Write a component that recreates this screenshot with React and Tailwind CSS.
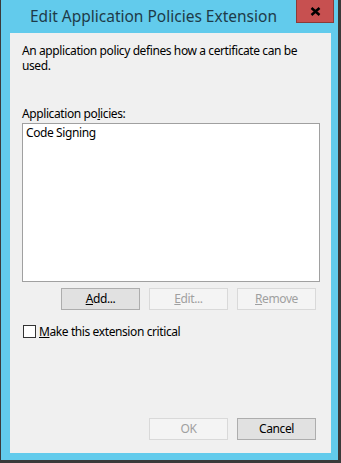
export default function App() {
  const font = { fontFamily: '"Noto Sans", "Open Sans", "Liberation Sans", sans-serif' };
  return (
    <div className="w-[341px] h-[463px] bg-white">
      <div
        className="w-[341px] h-[463px] bg-[#62cbec] border-l border-r-[3px] border-b-[3px] border-[#3a3a3a] flex flex-col"
        style={font}
      >
        <div className="h-[33px] flex items-start">
          <div className="ml-[29px] mt-[5px] text-[15.5px] leading-[22px] text-[#1e3b49]">
            Edit Application Policies Extension
          </div>
          <div className="ml-auto mr-[4px] w-[38px] h-[23px] bg-[#c75050] border-x border-b border-[#8a3b38] flex items-center justify-center">
            <svg width="11" height="9" viewBox="0 0 11 9">
              <path d="M1.5 1 L9.5 8 M9.5 1 L1.5 8" stroke="#000" strokeWidth="2.5" />
            </svg>
          </div>
        </div>
        <div className="ml-[9px] mr-[7px] h-[420px] bg-[#f0f0f0] flex flex-col text-[12px] text-[#000] tracking-[-0.4px]">
          <div className="pl-[12px] pt-[10px] leading-[15px] pr-[20px]">
            An application policy defines how a certificate can be used.
          </div>
          <div className="pl-[12px] mt-[33px] leading-[15px]">
            Application po<span className="underline">l</span>icies:
          </div>
          <div className="ml-[12px] mt-[2px] w-[298px] h-[159px] bg-white border border-[#a0a0a0] pl-[3px] pt-[1px] leading-[15px]">
            Code Signing
          </div>
          <div className="flex gap-[9px] ml-[51px] mt-[6px]">
            <div className="w-[79px] h-[22px] bg-[#e1e1e1] border border-[#adadad] flex items-center justify-center">
              <span><span className="underline">A</span>dd...</span>
            </div>
            <div className="w-[79px] h-[22px] bg-[#f4f4f4] border border-[#d9d9d9] text-[#a0a0a0] flex items-center justify-center">
              <span><span className="underline">E</span>dit...</span>
            </div>
            <div className="w-[79px] h-[22px] bg-[#f4f4f4] border border-[#d9d9d9] text-[#a0a0a0] flex items-center justify-center">
              <span><span className="underline">R</span>emove</span>
            </div>
          </div>
          <div className="flex items-center ml-[13px] mt-[14px]">
            <div className="w-[13px] h-[13px] bg-white border border-[#333]" />
            <span className="ml-[3px] leading-[15px]"><span className="underline">M</span>ake this extension critical</span>
          </div>
          <div className="flex-1" />
          <div className="flex gap-[9px] ml-[139px] mb-[13px]">
            <div className="w-[79px] h-[22px] bg-[#f4f4f4] border border-[#d9d9d9] text-[#a0a0a0] flex items-center justify-center">
              OK
            </div>
            <div className="w-[79px] h-[22px] bg-[#e1e1e1] border border-[#adadad] flex items-center justify-center">
              Cancel
            </div>
          </div>
        </div>
      </div>
    </div>
  );
}
